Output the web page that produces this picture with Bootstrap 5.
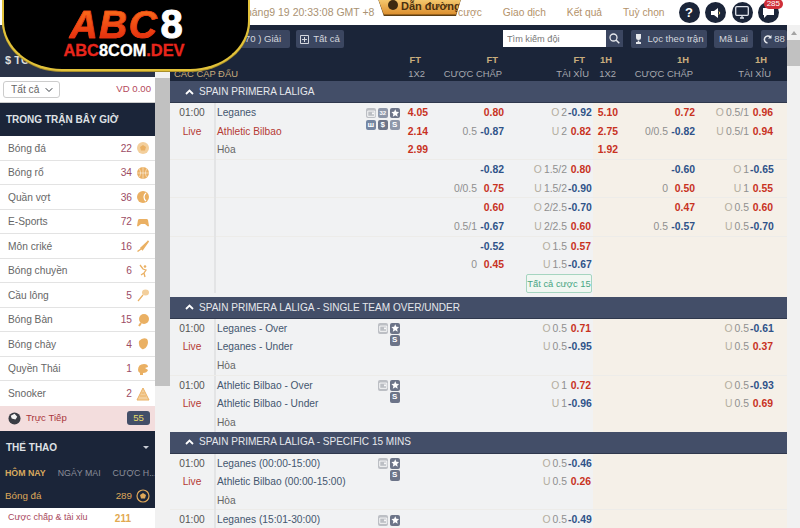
<!DOCTYPE html>
<html lang="vi">
<head>
<meta charset="UTF-8" />
<title>ABC8</title>
<link rel="stylesheet" href="https://cdn.jsdelivr.net/npm/bootstrap@5.3.3/dist/css/bootstrap.min.css" />
<style>
  html, body { width: 800px; height: 528px; overflow: hidden; }
  body { font-family: "Liberation Sans", Arial, sans-serif; font-size: 10.2px; color: #555; background: #f1f2f3; }
  .side-wrap { width: 155px; height: 528px; background: #fff; flex: none; }
  .side-top { height: 52px; background: #2a3347; color: #ddd; font-weight: 700; font-size: 11px; padding: 27px 0 0 5px; margin-top: 25px; }
  .side-filter { height: 26px; padding: 0 4px 0 3px; border-bottom: 1px solid #ccc; color: #b5485c; font-size: 9.6px; }
  .side-select { width: 57px; height: 17px; padding: 0 0 0 7px; font-size: 10.2px; color: #666; background-position: right 5px center; background-size: 10px 8px; border-color: #ccc; border-radius: 3px; }
  .side-head { height: 33px; background: #1b2539; color: #dfe1e5; font-weight: 700; font-size: 10px; padding-left: 6px; }
  .sport-list .list-group-item { height: 24.5px; padding: 1px 4px 0 8px; color: #666; border-color: #e3e3e3; font-size: 10.2px; background: #fff; border-radius: 0; }
  .sport-num { color: #9c4c64; margin-left: auto; width: 14px; text-align: right; }
  .sport-ic { width: 14px; height: 14px; margin-left: 4px; margin-right: 1px; flex: none; }
  .live-row { height: 25.5px; background: #f3dddd; color: #a9363c; padding: 0 5px 0 8px; font-size: 9.6px; gap: 5px; }
  .live-count { background: #434e68; color: #e9dc6a; font-size: 9.6px; font-weight: 400; border-radius: 3px; width: 23px; padding: 2px 0; margin-left: auto; }
  .sport-box { height: 77px; background: #1b2539; }
  .sport-title { height: 33px; padding: 0 6px; color: #dfe1e5; font-weight: 700; font-size: 10px; }
  .caret-mini { width: 0; height: 0; border: 3px solid transparent; border-top: 3px solid #c8ccd4; border-bottom: 0; }
  .day-tabs { height: 20px; padding-left: 5px; gap: 12px; color: #8b8f99; font-size: 8.8px; white-space: nowrap; }
  .day-on { color: #d8a95e; font-weight: 700; }
  .sport-now { height: 24px; padding: 0 5px; color: #dfa85a; font-size: 9.8px; }
  .sub-row { height: 20px; padding: 0 24px 0 8px; color: #a9485c; background: #fff; font-size: 9px; }
  .sub-num { color: #e2a94f; font-weight: 700; margin-left: auto; font-size: 10px; }
  .rail { width: 15px; height: 528px; background: #f1f1f1; padding-top: 78px; }
  .rail-thumb { height: 308px; background: #c1c1c1; }
  .main-col { width: 630px; height: 528px; }
  .top-bar { height: 25px; background: #fff; padding: 0 21px 0 73px; color: #aa9272; font-size: 10.5px; }
  .top-nav { gap: 21px; color: #b3926a; margin-left: auto; font-size: 10.2px; margin-right: 14px; }
  .guide-btn { left: 207px; top: -4px; width: 85px; height: 20px; background: #5b3d12; clip-path: polygon(0 0, 100% 0, 93% 100%, 8% 100%); }
  .guide-in { width: 100%; height: 18.5px; background: linear-gradient(#fbd77e, #db8d2d); clip-path: polygon(0 0, 100% 0, 93% 100%, 8% 100%); padding: 4px 0 0 11px; color: #4a3010; font-weight: 700; font-size: 11px; line-height: 12px; gap: 3px; white-space: nowrap; }
  .guide-dot { width: 10px; height: 10px; border-radius: 50%; background: #3d2a10; flex: none; }
  .round-ic { width: 21px; height: 21px; border-radius: 50%; background: #1b2539; margin-right: 5.5px; color: #fff; font-weight: 700; font-size: 13px; flex: none; }
  .round-ic:last-child { margin-right: 0; }
  .msg-badge { top: -3px; right: -4px; background: #cf2f38; color: #fff; font-size: 8px; font-weight: 400; padding: 1px 3px; border-radius: 7px; }
  .scroll-col { width: 13px; background: #f1f1f1; }
  .scroll-up { width: 0; height: 0; border: 3.5px solid transparent; border-bottom: 4px solid #a3a3a3; border-top: 0; margin: 6px auto 5px; }
  .scroll-thumb { height: 26px; background: #c1c1c1; }
  .content-col { width: 617px; }
  .tool-bar { height: 56px; background: #1b2539; }
  .tool-top { height: 28px; padding: 5px 0 0 0; }
  .tool-btn { height: 18px; padding: 0; background: #3b4660; color: #d4d7de; border: 0; border-radius: 2px; font-size: 9.6px; line-height: 18px; white-space: nowrap; justify-content: center; }
  .tb-league { width: 60px; margin-left: 60px; }
  .tb-all { width: 48px; margin-left: 6px; }
  .tb-filter { width: 76px; margin-left: 8px; }
  .tb-odds { width: 39px; margin-left: 7px; }
  .tb-refresh { width: 26px; margin-left: 8px; gap: 2px; }
  .team-search { width: 120px; height: 17px; margin-left: auto; flex-wrap: nowrap; }
  .team-search .form-control { height: 17px; min-height: 0; padding: 0 4px; font-size: 9.2px; border: 0; border-radius: 0; }
  .team-search .form-control::placeholder { color: #777; }
  .search-go { width: 18px; height: 17px; background: #3b4660; flex: none; }
  .col-grid { display: grid; grid-template-columns: 46px 149px 37px 27px 49px 27px 63px 24px 27px 50px 27px 54px 24px 13px; }
  .col-heads { color: #c9ad7d; font-size: 9.4px; height: 28px; grid-template-rows: 14px 14px; line-height: 14px; }
  .col-heads .ft { font-weight: 700; text-align: right; color: #c9ad7d; }
  .col-heads .nm { text-align: right; color: #a8aab0; }
  .pair-name { grid-column: 1 / span 3; grid-row: 2; padding-left: 4px; color: #c9ad7d; white-space: nowrap; }
  .sec-head { height: 22px; background: #434e68; border-bottom: 1px solid #2f384d; color: #e6e8ec; font-size: 10.05px; padding-left: 15px; gap: 5px; white-space: nowrap; }
  .sec-gap { height: 4px; background: linear-gradient(90deg, #f1f2f3 423px, #f5f0e8 423px); }
  .match { background: linear-gradient(90deg, #f1f2f3 423px, #f5f0e8 423px); }
  .match-line { border-bottom: 1px solid #edece9; }
  .match-row { height: 18.67px; line-height: 19.6px; white-space: nowrap; }
  .c-time { text-align: center; color: #555; border-right: 2px solid #e3e4e5; padding: 0 4px; }
  .c-live { color: #b53a34; }
  .c-team { padding-left: 1px; color: #44566f; }
  .c-team.home-red { color: #b53a34; }
  .c-team.draw { color: #666; }
  .c-icons { display: flex; align-items: center; justify-content: flex-end; gap: 1.5px; padding-right: 2px; }
  .c-icons.low { align-items: flex-start; margin-top: -2px; }
  .c-line { text-align: right; color: #8f8f8f; padding-right: 1px; font-size: 10.4px; }
  .c-line i { font-style: normal; color: #b4aea0; margin-right: 2px; }
  .odd { text-align: right; font-weight: 700; padding-right: 1px; font-size: 10.4px; }
  .odd-r { color: #c8321f; }
  .odd-b { color: #2f5288; }
  .bets-cell { grid-column: 7 / span 2; grid-row: 1; }
  .all-bets { height: 19px; width: 66px; padding: 0; line-height: 17px; font-size: 9.4px; color: #49a684; background: #f1f7f2; border: 1px solid #a5d5c0; border-radius: 2px; white-space: nowrap; }
  .mini-ic { width: 10.5px; height: 10.5px; border-radius: 2px; font-size: 8px; line-height: 10.5px; text-align: center; color: #fff; font-weight: 700; flex: none; display: block; }
  .mini-num { font-size: 6px; }
  .mi-dark { background: #6c7488; }
  .mi-mid { background: #8e97a9; }
  .mi-light { background: #bcbfc4; }
  .mi-blue { background: #7486a2; }
  .mi-empty { background: transparent; }
  .logo-plate { left: 2px; top: -4px; width: 248px; height: 75px; background: #000; border: 2px solid #e2c23a; border-top: 0; border-bottom-left-radius: 60px 50px; border-bottom-right-radius: 60px 50px; text-align: center; padding-top: 10px; box-shadow: 0 1px 0 #a98f2a; }
  .logo-big { font: italic 700 39px/36px "Liberation Sans", Arial, sans-serif; }
  .logo-abc { letter-spacing: 1.5px; background: linear-gradient(#ff7a1c, #e0200c); -webkit-background-clip: text; background-clip: text; -webkit-text-fill-color: transparent; -webkit-text-stroke: .6px #ef3a12; }
  .logo-eight { color: #fff; font-style: normal; font-size: 40px; -webkit-text-stroke: 1px #fff; margin-left: 2px; }
  .logo-small { font: 700 16.4px/14px "Liberation Sans", Arial, sans-serif; color: #e8261c; margin-left: -4px; -webkit-text-stroke: .3px; }
  .logo-small b { color: #fff; }
</style>
</head>
<body>
<div class="d-flex">
  <!-- sidebar -->
  <div class="side-wrap d-flex flex-column">
    <div class="side-top">$ TỔNG</div>
    <div class="side-filter d-flex align-items-center justify-content-between">
      <select class="form-select side-select"><option>Tất cả</option></select>
      <span>VD 0.00</span>
    </div>
    <div class="side-head d-flex align-items-center">TRONG TRẬN BÂY GIỜ</div>
    <ul class="list-group list-group-flush sport-list" id="sportList"></ul>
    <div class="live-row d-flex align-items-center">
      <svg width="13" height="13" viewBox="0 0 14 14"><circle cx="7" cy="7" r="6.5" fill="#3a3d44"/><path d="M3 4l4-2 3 3-2 3-4-1z" fill="#f4f4f4"/></svg>
      <span>Trực Tiếp</span>
      <span class="badge live-count">55</span>
    </div>
    <div class="sport-box">
      <div class="sport-title d-flex align-items-center justify-content-between"><span>THỂ THAO</span><span class="caret-mini"></span></div>
      <div class="day-tabs d-flex align-items-center"><span class="day-on">HÔM NAY</span><span>NGÀY MAI</span><span>CƯỢC H...</span></div>
      <div class="sport-now d-flex align-items-center">
        <span>Bóng đá</span><span class="ms-auto me-1">289</span>
        <svg class="sport-ic m-0" viewBox="0 0 14 14"><circle cx="7" cy="7" r="6" fill="none" stroke="#dfa85a" stroke-width="1.2"/><path d="M7 4l3 2-1 3.4H5L4 6z" fill="#dfa85a"/></svg>
      </div>
    </div>
    <div class="sub-row d-flex align-items-center"><span>Cược chấp &amp; tài xỉu</span><span class="sub-num">211</span></div>
  </div>
  <div class="rail"><div class="rail-thumb"></div></div>

  <!-- main -->
  <div class="main-col">
    <div class="top-bar d-flex align-items-center position-relative">
      <span>tháng9 19 20:33:08 GMT +8</span>
      <div class="guide-btn position-absolute">
        <div class="guide-in d-flex align-items-start"><span class="guide-dot"></span><span>Dẫn đường</span></div>
      </div>
      <div class="top-nav d-flex"><span>cược</span><span>Giao dịch</span><span>Kết quả</span><span>Tuỳ chọn</span></div>
      <span class="round-ic d-flex align-items-center justify-content-center">?</span>
      <span class="round-ic d-flex align-items-center justify-content-center">
        <svg width="12" height="12" viewBox="0 0 12 12"><path d="M1 4h3l4-3v10L4 8H1z" fill="#fff"/><path d="M9 4.500a2 2 0 010 3" stroke="#f1d678" fill="none"/></svg>
      </span>
      <span class="round-ic d-flex align-items-center justify-content-center">
        <svg width="14" height="13" viewBox="0 0 14 13"><rect x=".7" y=".7" width="12.6" height="8.6" rx="1" fill="none" stroke="#dfe3ea" stroke-width="1.3"/><path d="M5 12h4M7 10v2" stroke="#dfe3ea" stroke-width="1.3"/></svg>
      </span>
      <span class="round-ic d-flex align-items-center justify-content-center position-relative">
        <svg width="13" height="12" viewBox="0 0 13 12"><path d="M1 1h11v7H5l-3 3V8H1z" fill="#fff"/></svg>
        <span class="badge position-absolute msg-badge">285</span>
      </span>
    </div>
    <div class="d-flex">
      <div class="content-col">
        <div class="tool-bar">
          <div class="tool-top d-flex">
            <button class="btn tool-btn tb-league">( 70 ) Giải</button>
            <button class="btn tool-btn tb-all d-flex align-items-center gap-1">
              <svg width="9" height="9" viewBox="0 0 9 9"><path d="M.5.5h8v8h-8zM4.5 2v5M2 4.500h5" fill="none" stroke="#d4d7de"/></svg>Tất cả
            </button>
            <div class="input-group team-search">
              <input class="form-control" type="text" placeholder="Tìm kiếm đội" />
              <span class="search-go d-flex align-items-center justify-content-center">
                <svg width="11" height="11" viewBox="0 0 11 11"><circle cx="4.5" cy="4.5" r="3.5" fill="none" stroke="#e6e8ec" stroke-width="1.3"/><path d="M7 7l3.300 3.300" stroke="#e6e8ec" stroke-width="1.5"/></svg>
              </span>
            </div>
            <button class="btn tool-btn tb-filter d-flex align-items-center gap-1">
              <svg width="9" height="10" viewBox="0 0 9 10"><path d="M2 0h5v3.500a2.500 2.500 0 01-5 0zM3.700 6.500h1.600v1.500H7V10H2V8h1.700z" fill="#e6e8ec"/></svg>Lọc theo trận
            </button>
            <button class="btn tool-btn tb-odds">Mã Lai</button>
            <button class="btn tool-btn tb-refresh d-flex align-items-center">
              <svg width="9" height="9" viewBox="0 0 9 9"><path d="M7.500 2.200A3.500 3.500 0 104.500 8" fill="none" stroke="#e6e8ec" stroke-width="1.5"/><path d="M8.500 0v3.500H5z" fill="#e6e8ec"/></svg>88
            </button>
          </div>
          <div class="col-grid col-heads" id="colHeads"></div>
        </div>
        <div id="board"></div>
      </div>
      <div class="scroll-col"><div class="scroll-up"></div><div class="scroll-thumb"></div></div>
    </div>
  </div>
</div>

<!-- logo lies over the header -->
<div class="position-absolute logo-plate">
  <div class="logo-big"><span class="logo-abc">ABC</span><span class="logo-eight">8</span></div>
  <div class="logo-small"><span>ABC</span><b>8COM</b><span>.DEV</span></div>
</div>

<script src="https://cdn.jsdelivr.net/npm/bootstrap@5.3.3/dist/js/bootstrap.bundle.min.js"></script>
<script>
  // sport icons, all in the same orange
  const o = "#eab063";
  const icons = {
    ball: `<circle cx="7" cy="7" r="6" fill="#f3cf9c"/><path d="M7 4l3 2-1 3.400H5L4 6z" fill="${o}"/>`,
    basket: `<circle cx="7" cy="7" r="6" fill="${o}"/><path d="M1 7h12M7 1v12M3 2.500c2 3 2 6 0 9M11 2.500c-2 3-2 6 0 9" stroke="#fff" stroke-width=".5" fill="none"/>`,
    tennis: `<circle cx="7" cy="7" r="6" fill="${o}"/><path d="M10 3a5 5 0 000 8" stroke="#fff" stroke-width="1.200" fill="none"/>`,
    pad: `<path d="M1 11l1-6q.3-1 1.500-1h7q1.200 0 1.500 1l1 6-1 .5L9 9H5l-3 2.500z" fill="${o}"/>`,
    bat: `<path d="M12.500 2L5 9l1.500 1.500zM1.500 12.500L5 10" stroke="${o}" stroke-width="1.500" fill="${o}"/>`,
    volley: `<circle cx="9" cy="2.500" r="1.300" fill="${o}"/><path d="M4 1l3 4 3 1-2 3 1 4M8 9L5 11" stroke="${o}" stroke-width="1.300" fill="none"/>`,
    racket: `<ellipse cx="9.500" cy="4.500" rx="3.500" ry="3" fill="#f3cf9c"/><path d="M7 7l-5 6" stroke="${o}" stroke-width="1.200"/>`,
    pingpong: `<circle cx="8" cy="6" r="5" fill="${o}"/><path d="M5 10l-2 3" stroke="${o}" stroke-width="2"/>`,
    glove: `<path d="M3 4q4-4 8-2 2 3 0 7-2 4-5 3-4-3-3-8z" fill="${o}"/>`,
    box: `<path d="M2 8q0-6 6-6 4 0 4 3l-3 1 3 2q-1 3-5 3v2H4v-2Q2 10 2 8z" fill="${o}"/>`,
    snooker: `<path d="M7 1l6 12H1z" fill="#f3cf9c" stroke="${o}"/><path d="M4 9h6M5.500 6h3" stroke="${o}"/>`
  };
  const sports = [
    ["Bóng đá", 22, "ball"], ["Bóng rổ", 34, "basket"], ["Quần vợt", 36, "tennis"], ["E-Sports", 72, "pad"],
    ["Môn criké", 16, "bat"], ["Bóng chuyền", 6, "volley"], ["Cầu lông", 5, "racket"], ["Bóng Bàn", 15, "pingpong"],
    ["Bóng chày", 4, "glove"], ["Quyền Thái", 1, "box"], ["Snooker", 2, "snooker"]
  ];
  document.getElementById("sportList").innerHTML = sports.map(s =>
    `<li class="list-group-item d-flex align-items-center"><span>${s[0]}</span><span class="sport-num">${s[1]}</span><svg class="sport-ic" viewBox="0 0 14 14">${icons[s[2]]}</svg></li>`
  ).join("");

  // column heads
  function head(col, span, ft, nm, ftPad, nmPad) {
    return `<div class="ft" style="grid-column:${col}/span ${span};grid-row:1;padding-right:${ftPad}px">${ft}</div>` +
           `<div class="nm" style="grid-column:${col}/span ${span};grid-row:2;padding-right:${nmPad}px">${nm}</div>`;
  }
  document.getElementById("colHeads").innerHTML =
    `<div class="pair-name">CÁC CẶP ĐẤU</div>` +
    head(4, 1, "FT", "1X2", 8, 4) + head(5, 2, "FT", "CƯỢC CHẤP", 7, 3) + head(7, 2, "FT", "TÀI XỈU", 7, 3) +
    head(9, 1, "1H", "1X2", 7, 3) + head(10, 2, "1H", "CƯỢC CHẤP", 7, 3) + head(12, 2, "1H", "TÀI XỈU", 7, 3);

  // row icons
  const star = `<svg class="mini-ic mi-dark" viewBox="0 0 12 12"><path d="M6 1.500l1.300 2.900 3.100.3-2.300 2.100.7 3.100L6 8.300 3.200 9.900l.7-3.100L1.600 4.700l3.100-.3z" fill="#fff"/></svg>`;
  const tv = `<svg class="mini-ic mi-light" viewBox="0 0 12 12"><path d="M2 3.500h8v6H2z" fill="none" stroke="#fff"/><path d="M7 5h2v2H7z" fill="#fff"/></svg>`;
  const sq = (c, t) => `<span class="mini-ic ${c}">${t}</span>`;
  const none = sq("mi-empty", "");
  const fullTop = tv + sq("mi-mid mini-num", "32") + star;
  const fullBot = sq("mi-blue", "ш") + sq("mi-dark", "$") + sq("mi-mid", "S");
  const shortTop = tv + star;
  const shortBot = sq("mi-dark", "S");

  function odd(v) {
    if (!v) return `<div class="odd"></div>`;
    return `<div class="odd ${v[0] === "-" ? "odd-b" : "odd-r"}">${v}</div>`;
  }
  function line(v) {
    if (!v) return `<div class="c-line"></div>`;
    const m = v.match(/^([OU]) (.*)$/);
    return `<div class="c-line">${m ? `<i>${m[1]}</i>${m[2]}` : v}</div>`;
  }
  // r = [time, team, teamClass, iconHtml, x12, hdp, hdpOdd, ou, ouOdd, x12h, hdph, hdphOdd, ouh, ouhOdd]
  function row(r) {
    return `<div class="col-grid match-row">
      <div class="c-time ${r[0] === "Live" ? "c-live" : ""}">${r[0] || ""}</div>
      <div class="c-team ${r[2] || ""}">${r[1] || ""}</div>
      <div class="c-icons ${r[0] === "Live" ? "low" : ""}">${r[3] || ""}</div>
      ${odd(r[4])}${line(r[5])}${odd(r[6])}${line(r[7])}${odd(r[8])}${odd(r[9])}${line(r[10])}${odd(r[11])}${line(r[12])}${odd(r[13])}<div></div>
    </div>`;
  }
  const blk = (rows, last) => `<div class="match ${last ? "" : "match-line"}">${rows.map(row).join("")}</div>`;
  const sec = t => `<div class="sec-head d-flex align-items-center">
    <svg width="9" height="6" viewBox="0 0 9 6"><path d="M1 5l3.500-3.500L8 5" stroke="#fff" stroke-width="1.800" fill="none"/></svg><span>${t}</span></div>`;

  let html = sec("SPAIN PRIMERA LALIGA");
  html += blk([
    ["01:00", "Leganes", "", fullTop, "4.05", "", "0.80", "O 2", "-0.92", "5.10", "", "0.72", "O 0.5/1", "0.96"],
    ["Live", "Athletic Bilbao", "home-red", fullBot, "2.14", "0.5", "-0.87", "U 2", "0.82", "2.75", "0/0.5", "-0.82", "U 0.5/1", "0.94"],
    ["", "Hòa", "draw", "", "2.99", "", "", "", "", "1.92"]
  ]);
  html += blk([
    ["", "", "", "", "", "", "-0.82", "O 1.5/2", "0.80", "", "", "-0.60", "O 1", "-0.65"],
    ["", "", "", "", "", "0/0.5", "0.75", "U 1.5/2", "-0.90", "", "0", "0.50", "U 1", "0.55"]
  ]);
  html += blk([
    ["", "", "", "", "", "", "0.60", "O 2/2.5", "-0.70", "", "", "0.47", "O 0.5", "0.60"],
    ["", "", "", "", "", "0.5/1", "-0.67", "U 2/2.5", "0.60", "", "0.5", "-0.57", "U 0.5", "-0.70"]
  ]);
  html += `<div class="match">` +
    row(["", "", "", "", "", "", "-0.52", "O 1.5", "0.57"]) +
    row(["", "", "", "", "", "0", "0.45", "U 1.5", "-0.67"]) +
    `<div class="col-grid match-row"><div class="c-time"></div><div class="bets-cell d-flex justify-content-end"><button class="btn all-bets">Tất cả cược 15</button></div></div>` +
    `</div><div class="sec-gap"></div>`;

  html += sec("SPAIN PRIMERA LALIGA - SINGLE TEAM OVER/UNDER");
  html += blk([
    ["01:00", "Leganes - Over", "", shortTop, "", "", "", "O 0.5", "0.71", "", "", "", "O 0.5", "-0.61"],
    ["Live", "Leganes - Under", "", none + shortBot, "", "", "", "U 0.5", "-0.95", "", "", "", "U 0.5", "0.37"],
    ["", "Hòa", "draw"]
  ]);
  html += blk([
    ["01:00", "Athletic Bilbao - Over", "", shortTop, "", "", "", "O 1", "0.72", "", "", "", "O 0.5", "-0.93"],
    ["Live", "Athletic Bilbao - Under", "", none + shortBot, "", "", "", "U 1", "-0.96", "", "", "", "U 0.5", "0.69"],
    ["", "Hòa", "draw"]
  ], true);

  html += sec("SPAIN PRIMERA LALIGA - SPECIFIC 15 MINS");
  html += blk([
    ["01:00", "Leganes (00:00-15:00)", "", shortTop, "", "", "", "O 0.5", "-0.46"],
    ["Live", "Athletic Bilbao (00:00-15:00)", "", none + shortBot, "", "", "", "U 0.5", "0.26"],
    ["", "Hòa", "draw"]
  ]);
  html += blk([
    ["01:00", "Leganes (15:01-30:00)", "", shortTop, "", "", "", "O 0.5", "-0.49"]
  ], true);
  document.getElementById("board").innerHTML = html;
</script>
</body>
</html>
